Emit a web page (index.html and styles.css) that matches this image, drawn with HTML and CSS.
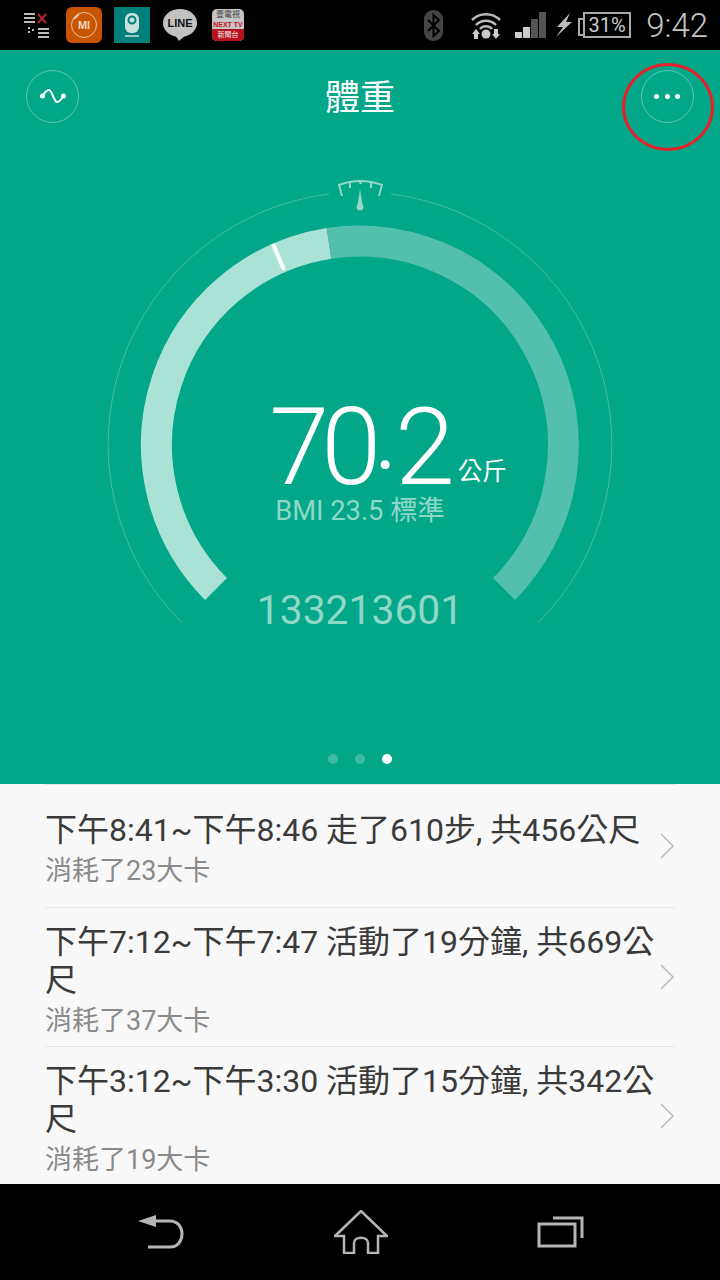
FILE: index.html
```html
<!DOCTYPE html>
<html lang="zh-Hant">

<head>
    <meta charset="UTF-8">
    <meta name="viewport" content="width=device-width, initial-scale=1.0">
    <title>體重</title>
    <link rel="stylesheet" href="styles.css">
</head>

<body>
    <div class="status-bar">
        <div class="status-left">
            <svg class="notif-icon" width="26" height="27" viewBox="0 0 26 27">
                <path d="M0 2h11M0 6h11M0 10h11" stroke="#bbb" stroke-width="2" />
                <path d="M14 2l8 9M22 2l-8 9" stroke="#b3262b" stroke-width="2" />
                <path d="M4 16h2M4 20h2M8 18h2M14 17h11M14 21h11M14 25h11" stroke="#bbb" stroke-width="2" />
            </svg>
            <div class="app-icon app-mi">
                <svg width="36" height="36" viewBox="0 0 36 36">
                    <circle cx="18" cy="18" r="12.5" fill="none" stroke="#e8c4a8" stroke-width="1" />
                    <path d="M8 12l5-5" stroke="#e8c4a8" stroke-width="2" />
                    <text x="18" y="22" text-anchor="middle" class="mi-label">MI</text>
                </svg>
            </div>
            <div class="app-icon app-cam">
                <svg width="36" height="36" viewBox="0 0 36 36">
                    <rect x="11" y="6" width="14" height="20" rx="6" fill="#c9e0de" />
                    <circle cx="18" cy="13" r="3.5" fill="none" stroke="#00807a" stroke-width="2" />
                    <path d="M11 29h14" stroke="#c9e0de" stroke-width="1.5" />
                </svg>
            </div>
            <svg class="app-line" width="34" height="32" viewBox="0 0 34 32">
                <ellipse cx="17" cy="14" rx="17" ry="14" fill="#c2c2c2" />
                <path d="M12 26l4 6 8-7z" fill="#c2c2c2" />
                <text x="17" y="18" text-anchor="middle" class="line-label">LINE</text>
            </svg>
            <div class="app-news">
                <div class="news-top">壹電視</div>
                <div class="news-mid">NEXT TV</div>
                <div class="news-low">新聞台</div>
            </div>
        </div>
        <div class="status-right">
            <svg class="icon-bt" width="19" height="31" viewBox="0 0 19 31">
                <rect x="0" y="0" width="19" height="31" rx="9" fill="#444" />
                <path d="M4 10l11 11-5.500 5V5L15 10 4 21" fill="none" stroke="#000" stroke-width="2" />
            </svg>
            <svg class="icon-wifi" width="30" height="28" viewBox="0 0 30 28">
                <path d="M1 9a20 20 0 0 1 28 0M5 14a14 14 0 0 1 20 0M9 18a8 8 0 0 1 12 0" fill="none" stroke="#bbb" stroke-width="2.500" />
                <circle cx="15" cy="23" r="4.500" fill="#ccc" />
                <path d="M5 18l4 5H7v5H3v-5H1zM25 28l-4-5h2v-5h4v5h2z" fill="#ccc" />
            </svg>
            <svg class="icon-signal" width="31" height="26" viewBox="0 0 31 26">
                <rect x="0" y="20" width="7" height="6" fill="#ccc" />
                <rect x="8" y="15" width="7" height="11" fill="#ccc" />
                <rect x="16" y="7" width="7" height="19" fill="#555" />
                <rect x="24" y="0" width="7" height="26" fill="#555" />
            </svg>
            <svg class="icon-bolt" width="16" height="24" viewBox="0 0 16 24">
                <path d="M14 0L1 14h6L0 24 16 9h-6z" fill="#bbb" />
            </svg>
            <div class="battery">31%</div>
            <div class="clock">9:42</div>
        </div>
    </div>

    <div class="weight-panel">
        <div class="top-bar">
            <div class="round-btn">
                <svg width="28" height="14" viewBox="0 0 28 14">
                    <path d="M3.500 7C6 3 8 1 10 1c3 0 5 12 8 12 2 0 4-2 6.500-6" fill="none" stroke="#fff" stroke-width="2" />
                    <circle cx="3.500" cy="7" r="2.500" fill="#fff" />
                    <circle cx="24.500" cy="7" r="2.500" fill="#fff" />
                </svg>
            </div>
            <h1>體重</h1>
            <div class="round-btn">
                <span class="dot-more"></span><span class="dot-more"></span><span class="dot-more"></span>
            </div>
        </div>
        <div class="red-mark"></div>

        <div class="gauge">
            <svg class="gauge-art" width="720" height="612" viewBox="0 0 720 612">
                <path d="M182 481A252.500 252.500 0 0 1 329 52" fill="none" stroke="#fff" stroke-opacity=".25" />
                <path d="M391 52A252.500 252.500 0 0 1 538 481" fill="none" stroke="#fff" stroke-opacity=".25" />
                <path d="M216 447A204 204 0 0 1 329 101.400" fill="none" stroke="#abe2d6" stroke-width="31" />
                <path d="M329 101.400A204 204 0 0 1 504 447" fill="none" stroke="#52c0ad" stroke-width="31" />
                <path d="M273 102L284 128" stroke="#fff" stroke-width="4" />
                <path d="M342 54l-3-11q21-8 43 0l-3 11M350 41v5M371 41v5M360.500 39v3" fill="none" stroke="#8fd8c8" stroke-width="2" />
                <path d="M360 47l2.500 16h-5z" fill="#8fd8c8" />
                <circle cx="360" cy="65" r="3.500" fill="#8fd8c8" />
            </svg>
            <div class="reading">
                <div class="weight-row">
                    <span class="weight-value">70<span class="weight-dot">.</span>2</span>
                    <span class="weight-unit">公斤</span>
                </div>
                <div class="bmi">BMI 23.5 標準</div>
                <div class="steps">133213601</div>
            </div>
        </div>

        <div class="pager">
            <span class="pager-dot"></span>
            <span class="pager-dot"></span>
            <span class="pager-dot pager-on"></span>
        </div>
    </div>

    <div class="list">
        <div class="item item-one">
            <div class="item-text">
                <div class="item-title">下午8:41~下午8:46 走了610步, 共456公尺</div>
                <div class="item-sub">消耗了23大卡</div>
            </div>
            <svg class="chevron" width="15" height="26" viewBox="0 0 15 26"><path d="M1 1l12 12L1 25" fill="none" stroke="#bbb" stroke-width="1.500" /></svg>
        </div>
        <div class="item">
            <div class="item-text">
                <div class="item-title">下午7:12~下午7:47 活動了19分鐘, 共669公尺</div>
                <div class="item-sub">消耗了37大卡</div>
            </div>
            <svg class="chevron" width="15" height="26" viewBox="0 0 15 26"><path d="M1 1l12 12L1 25" fill="none" stroke="#bbb" stroke-width="1.500" /></svg>
        </div>
        <div class="item">
            <div class="item-text">
                <div class="item-title">下午3:12~下午3:30 活動了15分鐘, 共342公尺</div>
                <div class="item-sub">消耗了19大卡</div>
            </div>
            <svg class="chevron" width="15" height="26" viewBox="0 0 15 26"><path d="M1 1l12 12L1 25" fill="none" stroke="#bbb" stroke-width="1.500" /></svg>
        </div>
    </div>

    <div class="nav-bar">
        <svg width="46" height="34" viewBox="0 0 46 34">
            <path d="M0 6l18-6v12z" fill="#b5b5b5" />
            <path d="M16 6h16c16 0 16 26 0 26H10" fill="none" stroke="#b5b5b5" stroke-width="3" />
        </svg>
        <svg width="54" height="44" viewBox="0 0 54 44">
            <path d="M1 26L27 1l26 25H44v17H34V33c0-7-14-7-14 0v10H10V26z" fill="none" stroke="#b5b5b5" stroke-width="2.500" />
        </svg>
        <svg width="47" height="32" viewBox="0 0 47 32">
            <path d="M16 2h29v20" fill="none" stroke="#b5b5b5" stroke-width="3" />
            <rect x="2" y="8" width="36" height="22" fill="none" stroke="#b5b5b5" stroke-width="3" />
        </svg>
    </div>
</body>

</html>
```

FILE: styles.css
```css
* {
    box-sizing: border-box;
}

html,
body {
    margin: 0;
    padding: 0;
}

body {
    width: 720px;
    height: 1280px;
    overflow: hidden;
    font-family: Roboto, "Noto Sans CJK TC", sans-serif;
    background-color: #000;
}

.status-bar {
    height: 50px;
    display: flex;
    align-items: center;
    justify-content: space-between;
    padding: 0 12px 0 24px;
    background-color: #000;
}

.status-left,
.status-right {
    display: flex;
    align-items: center;
}

.app-icon {
    width: 36px;
    height: 36px;
}

.app-mi {
    margin-left: 16px;
    border-radius: 6px;
    background-color: #c95400;
}

.mi-label {
    fill: #f0d8c4;
    font-family: "Liberation Sans", sans-serif;
    font-size: 11px;
    font-weight: bold;
}

.app-cam {
    margin-left: 12px;
    background-color: #00807a;
}

.app-line {
    margin-left: 13px;
}

.line-label {
    fill: #111;
    font-family: "Liberation Sans", sans-serif;
    font-size: 11px;
    font-weight: bold;
}

.app-news {
    width: 32px;
    height: 32px;
    margin-left: 15px;
    overflow: hidden;
    border-radius: 5px;
    background-color: #c4c4c4;
    text-align: center;
}

.news-top {
    height: 12px;
    color: #444;
    font-size: 8px;
    line-height: 12px;
}

.news-mid {
    height: 8px;
    color: #c8101c;
    font-family: "Liberation Sans", sans-serif;
    font-size: 7px;
    font-weight: bold;
    line-height: 8px;
}

.news-low {
    height: 12px;
    background-color: #b8101c;
    color: #eee;
    font-size: 7px;
    line-height: 12px;
}

.icon-wifi {
    margin-left: 28px;
}

.icon-signal {
    margin-left: 14px;
}

.icon-bolt {
    margin-left: 10px;
}

.battery {
    position: relative;
    width: 48px;
    height: 26px;
    margin-left: 11px;
    border: 2px solid #aaa;
    color: #ccc;
    font-size: 20px;
    line-height: 22px;
    text-align: center;
}

/* nub of the battery, on the left */
.battery::before {
    content: "";
    position: absolute;
    left: -7px;
    top: 4px;
    width: 5px;
    height: 14px;
    border: 2px solid #aaa;
    border-right: none;
}

.clock {
    margin-left: 15px;
    color: #c4c4c4;
    font-size: 33px;
    font-weight: 300;
}

.weight-panel {
    position: relative;
    height: 734px;
    background-color: #02a688;
}

.top-bar {
    height: 92px;
    display: flex;
    align-items: center;
    justify-content: space-between;
    padding: 0 26px;
}

.top-bar h1 {
    margin: 0 0 4px;
    color: #fff;
    font-size: 35px;
    font-weight: 400;
}

.round-btn {
    width: 53px;
    height: 53px;
    display: flex;
    align-items: center;
    justify-content: center;
    gap: 5.5px;
    border: 1px solid rgba(255, 255, 255, .35);
    border-radius: 50%;
}

.dot-more {
    width: 5px;
    height: 5px;
    border-radius: 50%;
    background-color: #fff;
}

/* hand drawn red circle around the menu button */
.red-mark {
    position: absolute;
    left: 622px;
    top: 13px;
    width: 92px;
    height: 88px;
    border: 3px solid #e8202a;
    border-radius: 50%;
}

.gauge {
    position: relative;
    height: 612px;
}

.gauge-art {
    position: absolute;
    top: 0;
    left: 0;
}

.reading {
    position: relative;
    display: flex;
    flex-direction: column;
    align-items: center;
    padding-top: 255px;
}

.weight-row {
    height: 100px;
    display: flex;
    align-items: flex-end;
    padding-left: 56px;
}

.weight-value {
    color: #fff;
    font-size: 108px;
    font-weight: 300;
    line-height: 100px;
    letter-spacing: -8px;
}

.weight-dot {
    display: inline-block;
    margin-right: 4px;
    transform: translateY(-15px);
}

.weight-unit {
    margin: 0 0 10px 11px;
    color: #fff;
    font-size: 24.5px;
    line-height: 30px;
}

.bmi {
    margin-top: 1px;
    color: #8fd8c8;
    font-size: 27.3px;
    line-height: 26px;
}

.steps {
    margin-top: 62px;
    color: #8fd8c8;
    font-size: 40.8px;
    line-height: 48px;
}

.pager {
    display: flex;
    justify-content: center;
    gap: 17px;
}

.pager-dot {
    width: 10px;
    height: 10px;
    border-radius: 50%;
    background-color: #3fb9a3;
}

.pager-on {
    background-color: #fff;
}

.list {
    height: 400px;
    overflow: hidden;
    padding: 0 45px;
    background-color: #f8f8f8;
}

.item {
    display: flex;
    align-items: center;
    padding: 15px 0 6px;
    border-top: 1px solid #e6e6e6;
}

.item-one {
    padding: 26px 0 17px;
}

.item-text {
    flex: 1;
}

.item-title {
    color: #3a3a3a;
    font-size: 32px;
    line-height: 38px;
}

.item-sub {
    margin-top: 3px;
    color: #8a8a8a;
    font-size: 27px;
    line-height: 38px;
}

.chevron {
    margin: 0 0 10px 3px;
}

.nav-bar {
    height: 96px;
    display: flex;
    align-items: center;
    justify-content: space-between;
    padding: 0 136px 0 138px;
    background-color: #000;
}
```
